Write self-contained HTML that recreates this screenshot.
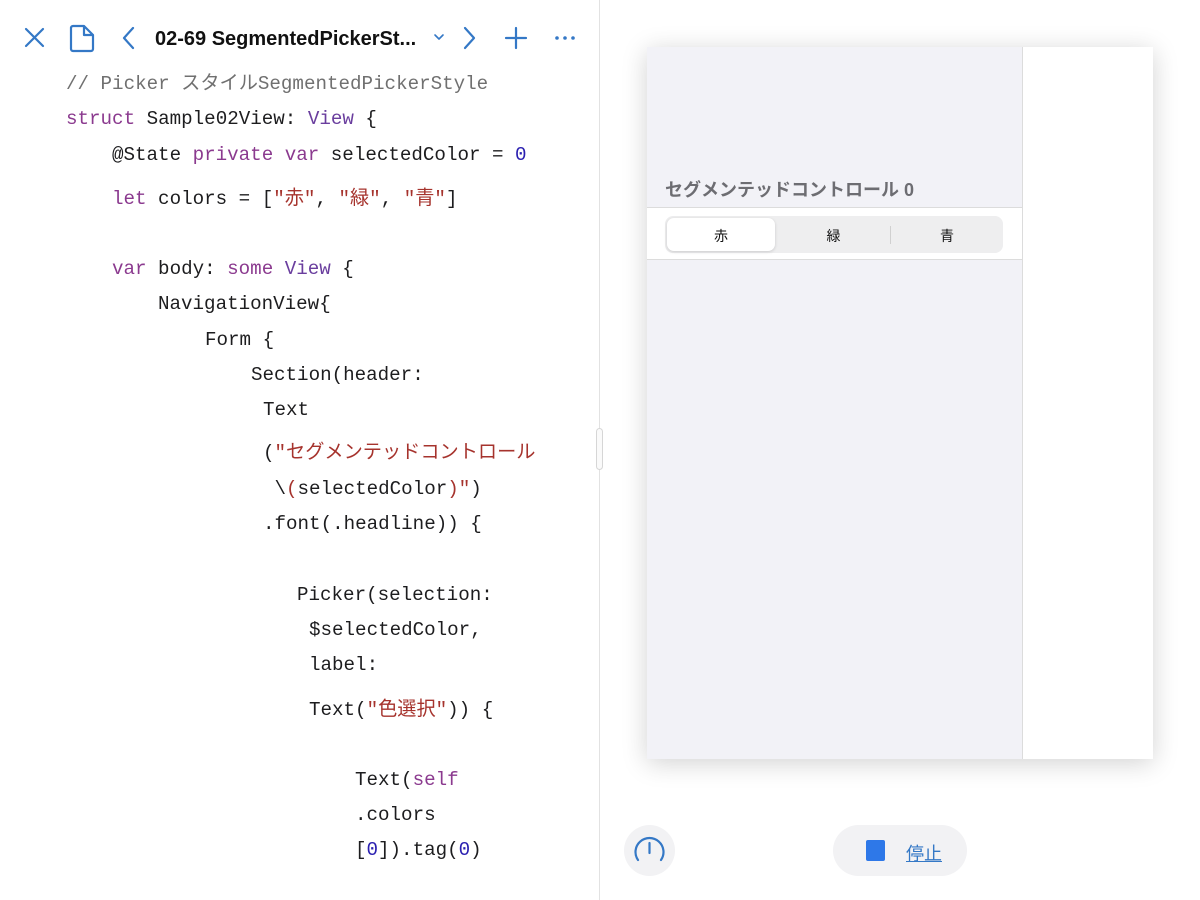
<!DOCTYPE html>
<html><head><meta charset="utf-8"><style>
body{margin:0;width:1200px;height:900px;background:#fff;position:relative;overflow:hidden;font-family:"Liberation Sans","Noto Sans CJK JP",sans-serif}
.l{position:absolute;font-family:"Liberation Mono","Noto Sans CJK JP",monospace;font-size:19.2px;color:#1d1d1f;white-space:pre;line-height:22px}
.c{color:#707070}.k{color:#8b3a8f}.t{color:#6a3e9e}.s{color:#a6332d}.n{color:#2a1fb0}
</style></head><body>
<svg style="position:absolute;left:0;top:0" width="600" height="70">
<g stroke="#3478c6" stroke-width="2.2" fill="none" stroke-linecap="round" stroke-linejoin="round">
<path d="M26 29 L43 46 M43 29 L26 46"/>
<path d="M73 26 h11 l9 9 v14 a2 2 0 0 1 -2 2 h-18 a2 2 0 0 1 -2 -2 v-21 a2 2 0 0 1 2 -2z M84 26 v9 h9"/>
<path d="M133 28 L124 38 L133 48"/>
<path d="M465 28 L474 38 L465 48"/>
<path d="M516 28 v20 M506 38 h20"/>
<path d="M435 35 l4 4 l4 -4" stroke-width="1.6"/>
</g>
<g fill="#3478c6"><circle cx="557" cy="38" r="1.8"/><circle cx="565" cy="38" r="1.8"/><circle cx="573" cy="38" r="1.8"/></g>
<text x="155" y="45" font-family="Liberation Sans" font-weight="bold" font-size="20" fill="#111">02-69 SegmentedPickerSt...</text>
</svg>
<div class="l c" style="left:66px;top:73px">// Picker スタイルSegmentedPickerStyle</div>
<div class="l" style="left:66px;top:108px"><span class="k">struct</span> Sample02View: <span class="t">View</span> {</div>
<div class="l" style="left:112px;top:144px">@State <span class="k">private var</span> selectedColor = <span class="n">0</span></div>
<div class="l" style="left:112px;top:188px"><span class="k">let</span> colors = [<span class="s">"赤"</span>, <span class="s">"緑"</span>, <span class="s">"青"</span>]</div>
<div class="l" style="left:112px;top:258px"><span class="k">var</span> body: <span class="k">some</span> <span class="t">View</span> {</div>
<div class="l" style="left:158px;top:293px">NavigationView{</div>
<div class="l" style="left:205px;top:329px">Form {</div>
<div class="l" style="left:251px;top:364px">Section(header:</div>
<div class="l" style="left:263px;top:399px">Text</div>
<div class="l" style="left:263px;top:442px">(<span class="s">"セグメンテッドコントロール</span></div>
<div class="l" style="left:263px;top:478px"> \<span class="s">(</span>selectedColor<span class="s">)"</span>)</div>
<div class="l" style="left:263px;top:513px">.font(.headline)) {</div>
<div class="l" style="left:297px;top:584px">Picker(selection:</div>
<div class="l" style="left:309px;top:619px">$selectedColor,</div>
<div class="l" style="left:309px;top:654px">label:</div>
<div class="l" style="left:309px;top:699px">Text(<span class="s">"色選択"</span>)) {</div>
<div class="l" style="left:355px;top:769px">Text(<span class="k">self</span></div>
<div class="l" style="left:355px;top:804px">.colors</div>
<div class="l" style="left:355px;top:839px">[<span class="n">0</span>]).tag(<span class="n">0</span>)</div>
<div style="position:absolute;left:599px;top:0;width:1px;height:900px;background:#e2e2e2"></div>
<div style="position:absolute;left:596px;top:428px;width:7px;height:42px;border:1px solid #d6d6d6;border-radius:4px;background:#fafafa;box-sizing:border-box"></div>
<div style="position:absolute;left:647px;top:47px;width:506px;height:712px;background:#fff;box-shadow:0 4px 24px rgba(0,0,0,0.18)">
 <div style="position:absolute;left:0;top:0;width:375px;height:712px;background:#f2f2f7;border-right:1px solid #dcdcdc"></div>
 <div style="position:absolute;left:18px;top:129px;font-size:18px;font-weight:bold;color:#6d6d72">セグメンテッドコントロール 0</div>
 <div style="position:absolute;left:0;top:160px;width:375px;height:53px;background:#fff;border-top:1px solid #dcdcdc;border-bottom:1px solid #dcdcdc;box-sizing:border-box"></div>
 <div style="position:absolute;left:18px;top:169px;width:338px;height:37px;background:#eeeeef;border-radius:8px"></div>
 <div style="position:absolute;left:20px;top:171px;width:108px;height:33px;background:#fff;border-radius:7px;box-shadow:0 1px 3px rgba(0,0,0,0.15)"></div>
 <div style="position:absolute;left:243px;top:179px;width:1px;height:18px;background:#d0d0d0"></div>
 <div style="position:absolute;left:20px;top:179px;width:108px;text-align:center;font-size:14px;color:#111">赤</div>
 <div style="position:absolute;left:130px;top:179px;width:113px;text-align:center;font-size:14px;color:#111">緑</div>
 <div style="position:absolute;left:244px;top:179px;width:112px;text-align:center;font-size:14px;color:#111">青</div>
</div>
<div style="position:absolute;left:624px;top:825px;width:51px;height:51px;border-radius:50%;background:#f2f2f4"></div>
<svg style="position:absolute;left:624px;top:825px" width="51" height="51">
<g stroke="#3478c6" stroke-width="2.2" fill="none" stroke-linecap="round">
<path d="M14 35 A14 14 0 1 1 37 35"/><path d="M25.5 18 v10"/>
</g></svg>
<div style="position:absolute;left:833px;top:825px;width:134px;height:51px;border-radius:26px;background:#f2f2f4"></div>
<div style="position:absolute;left:866px;top:840px;width:19px;height:21px;border-radius:2px;background:#2e78e8"></div>
<div style="position:absolute;left:906px;top:840px;font-size:18px;color:#3478c6;text-decoration:underline">停止</div>
</body></html>
